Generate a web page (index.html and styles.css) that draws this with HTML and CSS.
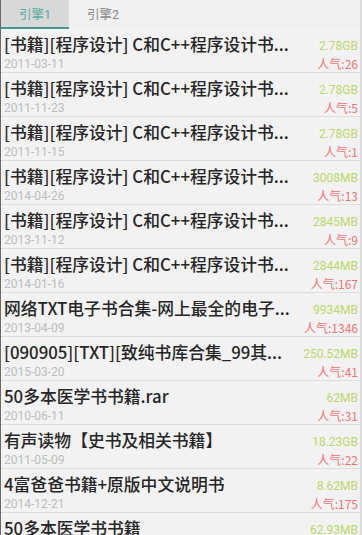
FILE: index.html
```html
<!DOCTYPE html>
<html lang="zh">
<head>
<meta charset="utf-8">
<title>引擎</title>
<link rel="stylesheet" href="styles.css">
</head>
<body>
<div class="app">
  <div class="tabs">
    <div class="tab active">引擎1</div>
    <div class="tab">引擎2</div>
  </div>
  <ul class="list">
    <li class="row"><div class="main"><div class="title">[书籍][程序设计] C和C++程序设计书...</div><div class="date">2011-03-11</div></div><div class="meta"><div class="size">2.78GB</div><div class="hot">人气:26</div></div></li>
    <li class="row"><div class="main"><div class="title">[书籍][程序设计] C和C++程序设计书...</div><div class="date">2011-11-23</div></div><div class="meta"><div class="size">2.78GB</div><div class="hot">人气:5</div></div></li>
    <li class="row"><div class="main"><div class="title">[书籍][程序设计] C和C++程序设计书...</div><div class="date">2011-11-15</div></div><div class="meta"><div class="size">2.78GB</div><div class="hot">人气:1</div></div></li>
    <li class="row"><div class="main"><div class="title">[书籍][程序设计] C和C++程序设计书...</div><div class="date">2014-04-26</div></div><div class="meta"><div class="size">3008MB</div><div class="hot">人气:13</div></div></li>
    <li class="row"><div class="main"><div class="title">[书籍][程序设计] C和C++程序设计书...</div><div class="date">2013-11-12</div></div><div class="meta"><div class="size">2845MB</div><div class="hot">人气:9</div></div></li>
    <li class="row"><div class="main"><div class="title">[书籍][程序设计] C和C++程序设计书...</div><div class="date">2014-01-16</div></div><div class="meta"><div class="size">2844MB</div><div class="hot">人气:167</div></div></li>
    <li class="row"><div class="main"><div class="title">网络TXT电子书合集-网上最全的电子...</div><div class="date">2013-04-09</div></div><div class="meta"><div class="size">9934MB</div><div class="hot">人气:1346</div></div></li>
    <li class="row"><div class="main"><div class="title">[090905][TXT][致纯书库合集_99其...</div><div class="date">2015-03-20</div></div><div class="meta"><div class="size">250.52MB</div><div class="hot">人气:41</div></div></li>
    <li class="row"><div class="main"><div class="title">50多本医学书书籍.rar</div><div class="date">2010-06-11</div></div><div class="meta"><div class="size">62MB</div><div class="hot">人气:31</div></div></li>
    <li class="row"><div class="main"><div class="title">有声读物【史书及相关书籍】</div><div class="date">2011-05-09</div></div><div class="meta"><div class="size">18.23GB</div><div class="hot">人气:22</div></div></li>
    <li class="row"><div class="main"><div class="title">4富爸爸书籍+原版中文说明书</div><div class="date">2014-12-21</div></div><div class="meta"><div class="size">8.62MB</div><div class="hot">人气:175</div></div></li>
    <li class="row"><div class="main"><div class="title">50多本医学书书籍</div><div class="date">2014-10-08</div></div><div class="meta"><div class="size">62.93MB</div><div class="hot">人气:12</div></div></li>
  </ul>
</div>
</body>
</html>
```
FILE: styles.css
```css
* { box-sizing: border-box; }
html, body { margin: 0; padding: 0; }
body {
  background: #f2f2f2;
  font-family: "Roboto", "Noto Sans CJK SC", sans-serif;
  overflow: hidden;
}
.app {
  width: 362px;
  height: 535px;
  border-left: 1px solid #6a6a6a;
  border-right: 2px solid #dcdcdc;
  overflow: hidden;
}
.tabs {
  display: flex;
  height: 29px;
  background: #f0f0f0;
}
.tab {
  width: 68px;
  height: 29px;
  display: flex;
  align-items: center;
  justify-content: center;
  font-size: 12.5px;
  color: #8a8a8a;
  padding-bottom: 3px;
}
.tab.active {
  background: #d8d8d8;
  color: #5aaea0;
  border-bottom: 2px solid #3d9c8e;
  padding-bottom: 1px;
}
.list {
  list-style: none;
  margin: 0;
  padding: 0;
}
.row {
  display: flex;
  height: 44px;
  border-bottom: 1px solid #dedede;
  padding: 4px 2px 0 3px;
}
.main {
  flex: 1;
  min-width: 0;
}
.title {
  font-family: "Noto Sans CJK SC", sans-serif;
  font-size: 16.8px;
  font-weight: 500;
  line-height: 23px;
  color: #262626;
  white-space: nowrap;
}
.date {
  font-size: 12px;
  line-height: 14px;
  margin-top: 1px;
  color: #bdbdbd;
}
.meta {
  width: 62px;
  flex: none;
  text-align: right;
  font-size: 12px;
}
.size {
  line-height: 14px;
  margin-top: 6px;
  color: #bcd86c;
}
.hot {
  font-family: "Noto Sans CJK SC", sans-serif;
  line-height: 16px;
  margin-top: 3px;
  color: #ee7474;
}
```
